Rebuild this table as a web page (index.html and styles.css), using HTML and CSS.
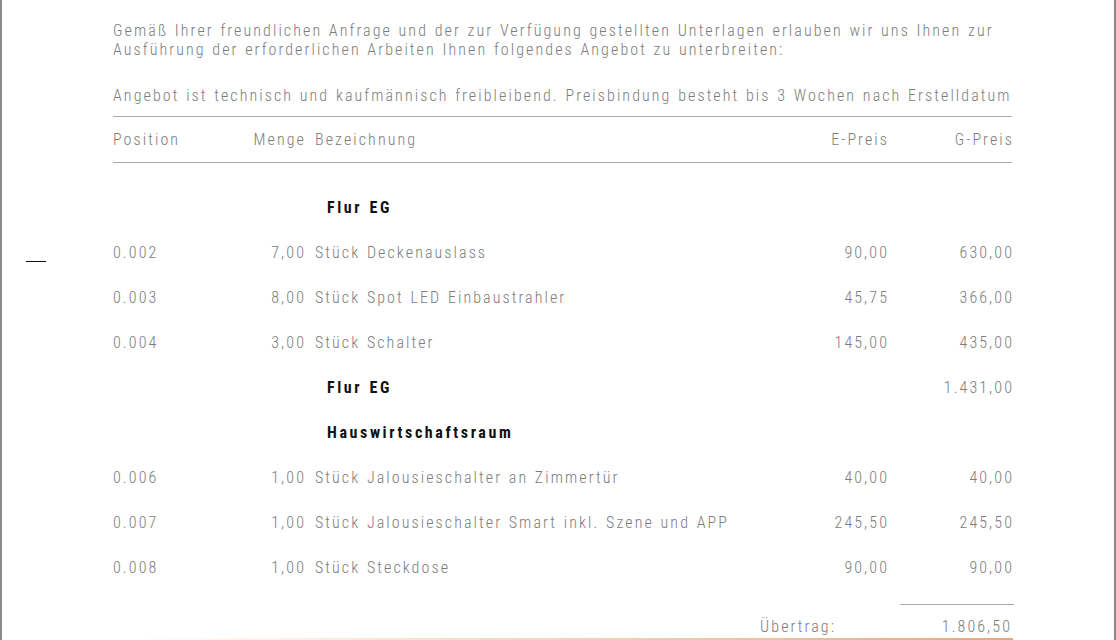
FILE: index.html
```html
<!DOCTYPE html>
<html lang="de">
<head>
    <meta charset="UTF-8">
    <title>Angebot</title>
    <link rel="stylesheet" href="styles.css">
</head>
<body>
    <div class="sheet">
        <!-- fold mark -->
        <div class="fold-mark"></div>

        <div class="content">
            <p class="intro">Gemäß Ihrer freundlichen Anfrage und der zur Verfügung gestellten Unterlagen erlauben wir uns Ihnen zur<br>Ausführung der erforderlichen Arbeiten Ihnen folgendes Angebot zu unterbreiten:</p>
            <p class="note">Angebot ist technisch und kaufmännisch freibleibend. Preisbindung besteht bis 3 Wochen nach Erstelldatum</p>

            <div class="table">
                <div class="row head">
                    <span>Position</span>
                    <span class="num">Menge</span>
                    <span class="desc">Bezeichnung</span>
                    <span class="num">E-Preis</span>
                    <span class="num">G-Preis</span>
                </div>

                <div class="body">
                    <div class="row group">
                        <span></span><span></span>
                        <span class="desc title">Flur EG</span>
                        <span></span><span></span>
                    </div>
                    <div class="row">
                        <span>0.002</span>
                        <span class="num">7,00</span>
                        <span class="desc">Stück Deckenauslass</span>
                        <span class="num">90,00</span>
                        <span class="num">630,00</span>
                    </div>
                    <div class="row">
                        <span>0.003</span>
                        <span class="num">8,00</span>
                        <span class="desc">Stück Spot LED Einbaustrahler</span>
                        <span class="num">45,75</span>
                        <span class="num">366,00</span>
                    </div>
                    <div class="row">
                        <span>0.004</span>
                        <span class="num">3,00</span>
                        <span class="desc">Stück Schalter</span>
                        <span class="num">145,00</span>
                        <span class="num">435,00</span>
                    </div>
                    <div class="row group">
                        <span></span><span></span>
                        <span class="desc title">Flur EG</span>
                        <span></span>
                        <span class="num">1.431,00</span>
                    </div>
                    <div class="row group">
                        <span></span><span></span>
                        <span class="desc title">Hauswirtschaftsraum</span>
                        <span></span><span></span>
                    </div>
                    <div class="row">
                        <span>0.006</span>
                        <span class="num">1,00</span>
                        <span class="desc">Stück Jalousieschalter an Zimmertür</span>
                        <span class="num">40,00</span>
                        <span class="num">40,00</span>
                    </div>
                    <div class="row">
                        <span>0.007</span>
                        <span class="num">1,00</span>
                        <span class="desc">Stück Jalousieschalter Smart inkl. Szene und APP</span>
                        <span class="num">245,50</span>
                        <span class="num">245,50</span>
                    </div>
                    <div class="row">
                        <span>0.008</span>
                        <span class="num">1,00</span>
                        <span class="desc">Stück Steckdose</span>
                        <span class="num">90,00</span>
                        <span class="num">90,00</span>
                    </div>
                </div>

                <div class="carry">
                    <span class="carry-label">Übertrag:</span>
                    <span class="carry-value">1.806,50</span>
                </div>
            </div>
        </div>
        <div class="page-edge"></div>
    </div>
</body>
</html>
```

FILE: styles.css
```css
body {
    margin: 0;
    background: #fff;
    font-family: Roboto, "Noto Sans", sans-serif;
    font-weight: 300;
    font-stretch: 85%;
    font-size: 16px;
    letter-spacing: 2.08px;
    word-spacing: 1px;
    color: #7c7c7c;
}

.sheet {
    position: relative;
    width: 1112px;
    height: 640px;
    border-left: 2px solid #8a8a8a;
    border-right: 2px solid #8a8a8a;
    overflow: hidden;
}

.fold-mark {
    position: absolute;
    left: 24px;
    top: 261px;
    width: 20px;
    height: 1px;
    background: #111;
}

.content {
    width: 899px;
    margin-left: 111px;
    padding-top: 21px;
}

p {
    margin: 0;
    line-height: 19px;
}

.note {
    margin-top: 27px;
}

.table {
    margin-top: 11px;
}

.row {
    display: grid;
    grid-template-columns: 100px 91px 1fr 100px 125px;
    align-items: center;
    height: 45px;
    white-space: nowrap;
}

.head {
    border-top: 1px solid #aaa;
    border-bottom: 1px solid #aaa;
}

.body {
    padding-top: 22px;
}

/* trailing letter-spacing pushes right-aligned text left */
.num {
    text-align: right;
    margin-right: -2px;
}

.desc {
    padding-left: 11px;
}

.title {
    padding-left: 23px;
    font-weight: 700;
    letter-spacing: 2.6px;
    color: #111;
}

.carry {
    display: flex;
    justify-content: flex-end;
    align-items: flex-end;
    margin-top: 14px;
}

.carry-label {
    margin-right: 64px;
    line-height: 20px;
}

.carry-value {
    width: 112px;
    padding-top: 12px;
    margin-right: -2px;
    padding-right: 2px;
    border-top: 1px solid #aaa;
    text-align: right;
    line-height: 20px;
}

.page-edge {
    position: absolute;
    left: 136px;
    top: 638px;
    width: 875px;
    height: 2px;
    background: linear-gradient(to right, rgba(240, 180, 130, 0), #f3dcc6 40%, #e8a878);
}
```
